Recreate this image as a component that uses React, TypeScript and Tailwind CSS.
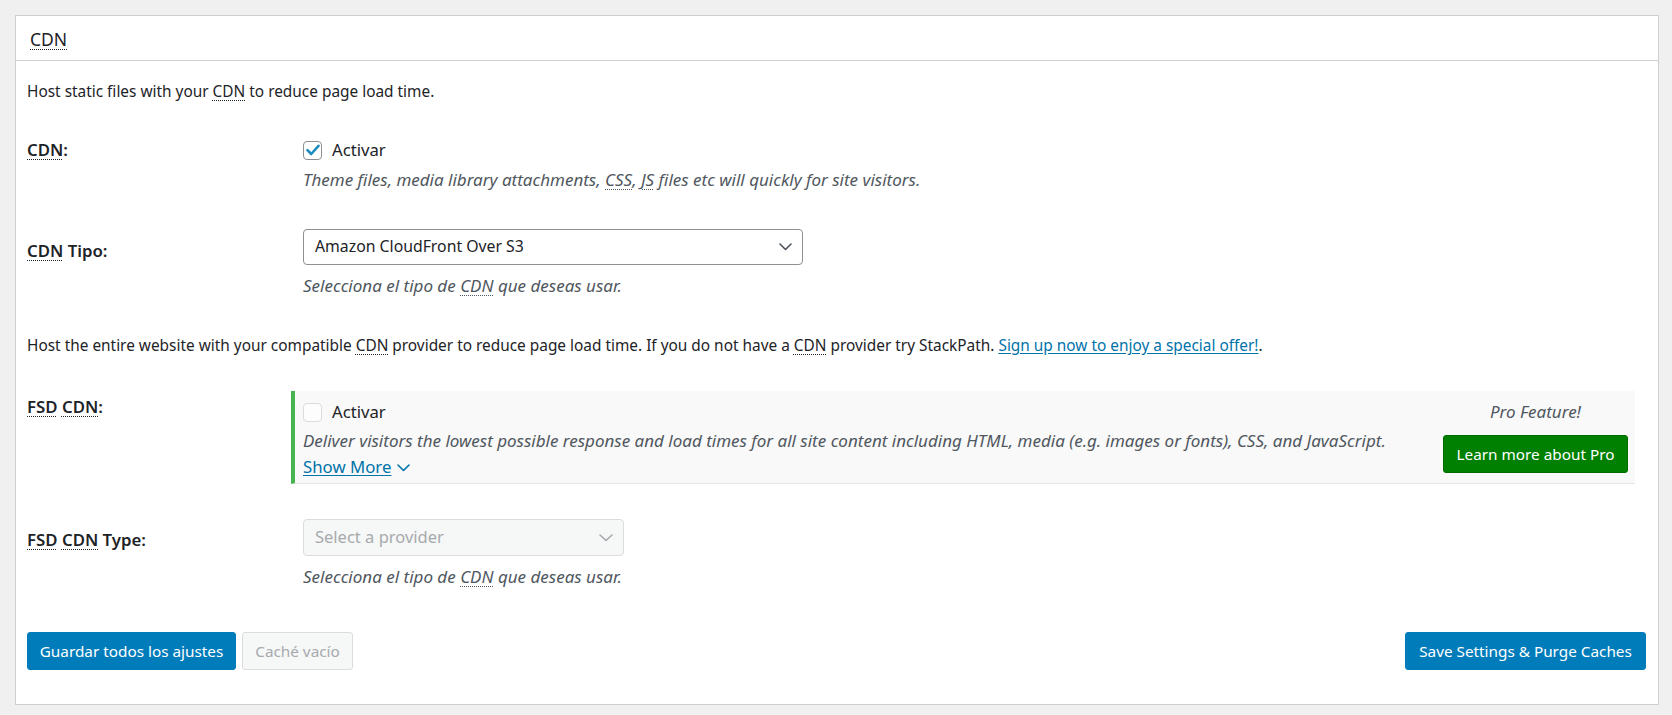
import React from 'react';

const font = "font-['Noto_Sans',sans-serif]";

function Abbr({ children, title }: { children: React.ReactNode; title?: string }) {
  return (
    <abbr
      title={title ?? 'Content Delivery Network'}
      className="no-underline underline decoration-dotted decoration-1 underline-offset-[3px]"
    >
      {children}
    </abbr>
  );
}

function Chevron({ className, w = 13, h = 8 }: { className: string; w?: number; h?: number }) {
  return (
    <svg width={w} height={h} viewBox={`0 0 ${w} ${h}`} fill="none" className={className}>
      <polyline
        points={`1,1 ${w / 2},${h - 1.5} ${w - 1},1`}
        stroke="currentColor"
        strokeWidth="1.6"
        strokeLinecap="round"
        strokeLinejoin="round"
      />
    </svg>
  );
}

function Checkbox({ checked, disabled }: { checked?: boolean; disabled?: boolean }) {
  return (
    <span
      className={`flex h-[19px] w-[19px] shrink-0 items-center justify-center rounded-[4px] border ${
        disabled ? 'border-[#dcdcde] bg-white/60' : 'border-[#8c8f94] bg-white'
      }`}
    >
      {checked && (
        <svg width="14" height="12" viewBox="0 0 14 12" fill="none">
          <path d="M1.5 6.2 L5.2 10 L12.5 1.8" stroke="#1e8cbe" strokeWidth="2.6" strokeLinecap="round" strokeLinejoin="round" />
        </svg>
      )}
    </span>
  );
}

export default function App() {
  return (
    <div className={`min-h-screen bg-[#f0f0f1] pl-[15px] pr-[13px] pt-[15px] text-[15.4px] text-[#1d2327] ${font}`}>
      <div className="h-[690px] border border-[#ccd0d4] bg-white">
        {/* Header */}
        <div className="flex h-[45px] items-center border-b border-[#ccd0d4] pl-[14px] pt-[2px]">
          <h2 className="text-[17.5px] leading-[22px]">
            <Abbr>CDN</Abbr>
          </h2>
        </div>

        <div className="px-[11px]">
          <p className="mt-[21px] leading-[20px]">
            Host static files with your <Abbr>CDN</Abbr> to reduce page load time.
          </p>

          {/* CDN */}
          <div className="mt-[38px] flex">
            <div className="w-[276px] text-[16.8px] font-semibold leading-[20px]">
              <Abbr>CDN</Abbr>:
            </div>
            <div className="flex flex-col">
              <label className="flex h-[20px] items-center gap-[10px]">
                <Checkbox checked />
                <span className="text-[16.7px]">Activar</span>
              </label>
              <p className="mt-[9px] text-[17px] italic leading-[22px] text-[#50575e]">
                Theme files, media library attachments, <Abbr title="Cascading Style Sheet">CSS</Abbr>,{' '}
                <Abbr title="JavaScript">JS</Abbr> files etc will quickly for site visitors.
              </p>
            </div>
          </div>

          {/* CDN Tipo */}
          <div className="mt-[38px] flex">
            <div className="mt-[12px] w-[276px] text-[16.8px] font-semibold leading-[20px]">
              <Abbr>CDN</Abbr> Tipo:
            </div>
            <div className="flex flex-col">
              <div className="flex h-[36px] w-[500px] items-center justify-between rounded-[4px] border border-[#8c8f94] bg-white pl-[11px] pr-[10px]">
                <span className="text-[15.8px]">Amazon CloudFront Over S3</span>
                <Chevron className="text-[#50575e]" />
              </div>
              <p className="mt-[10px] text-[17px] italic leading-[22px] text-[#50575e]">
                Selecciona el tipo de <Abbr>CDN</Abbr> que deseas usar.
              </p>
            </div>
          </div>

          <p className="mt-[39px] leading-[20px]">
            Host the entire website with your compatible <Abbr>CDN</Abbr> provider to reduce page load time. If you do
            not have a <Abbr>CDN</Abbr> provider try StackPath.{' '}
            <a href="#" className="text-[#0073aa] underline underline-offset-2">
              Sign up now to enjoy a special offer!
            </a>
            .
          </p>

          {/* FSD CDN */}
          <div className="mt-[35px] flex">
            <div className="mt-[6px] w-[264px] text-[16.8px] font-semibold leading-[20px]">
              <Abbr title="Full Site Delivery">FSD</Abbr> <Abbr>CDN</Abbr>:
            </div>
            <div className="mr-[12px] flex h-[93px] flex-1 justify-between border-b border-l-4 border-b-[#e2e4e7] border-l-[#46b450] bg-[#f9f9f9] pl-[8px] pt-[11px]">
              <div className="flex flex-col">
                <label className="flex h-[20px] items-center gap-[10px]">
                  <Checkbox disabled />
                  <span className="text-[16.7px]">Activar</span>
                </label>
                <p className="mt-[7px] text-[17px] italic leading-[24px] text-[#50575e]">
                  Deliver visitors the lowest possible response and load times for all site content including HTML,
                  media (e.g. images or fonts), CSS, and JavaScript.
                </p>
                <a href="#" className="mt-[2px] flex items-center gap-[6px] text-[16.8px] leading-[24px] text-[#0073aa]">
                  <span className="underline underline-offset-2">Show More</span>
                  <Chevron className="mt-[1px] text-[#0073aa]" w={13} h={8} />
                </a>
              </div>
              <div className="mr-[7px] flex w-[185px] flex-col items-center">
                <span className="text-[17px] italic leading-[20px] text-[#50575e]">Pro Feature!</span>
                <button className="mt-[13px] h-[38px] w-[185px] rounded-[3px] border border-[#006b00] bg-[#008000] text-[15.3px] text-white">
                  Learn more about Pro
                </button>
              </div>
            </div>
          </div>

          {/* FSD CDN Type */}
          <div className="mt-[35px] flex">
            <div className="mt-[11px] w-[276px] text-[16.8px] font-semibold leading-[20px]">
              <Abbr title="Full Site Delivery">FSD</Abbr> <Abbr>CDN</Abbr> Type:
            </div>
            <div className="flex flex-col">
              <div className="flex h-[37px] w-[321px] items-center justify-between rounded-[4px] border border-[#dcdcde] bg-[#f6f7f7] pl-[11px] pr-[10px]">
                <span className="text-[16.5px] text-[#a7aaad]">Select a provider</span>
                <Chevron className="text-[#a7aaad]" w={14} h={8} />
              </div>
              <p className="mt-[10px] text-[17px] italic leading-[22px] text-[#50575e]">
                Selecciona el tipo de <Abbr>CDN</Abbr> que deseas usar.
              </p>
            </div>
          </div>

          {/* Buttons */}
          <div className="mr-[1px] mt-[44px] flex items-center justify-between text-[15.3px]">
            <div className="flex gap-[6px]">
              <button className="h-[38px] w-[209px] rounded-[3px] border border-[#007cba] bg-[#007cba] text-white">
                Guardar todos los ajustes
              </button>
              <button className="h-[38px] w-[111px] rounded-[3px] border border-[#dcdcde] bg-[#f6f7f7] text-[#a7aaad]">
                Caché vacío
              </button>
            </div>
            <button className="h-[38px] w-[241px] rounded-[3px] border border-[#007cba] bg-[#007cba] text-white">
              Save Settings &amp; Purge Caches
            </button>
          </div>
        </div>
      </div>
    </div>
  );
}
